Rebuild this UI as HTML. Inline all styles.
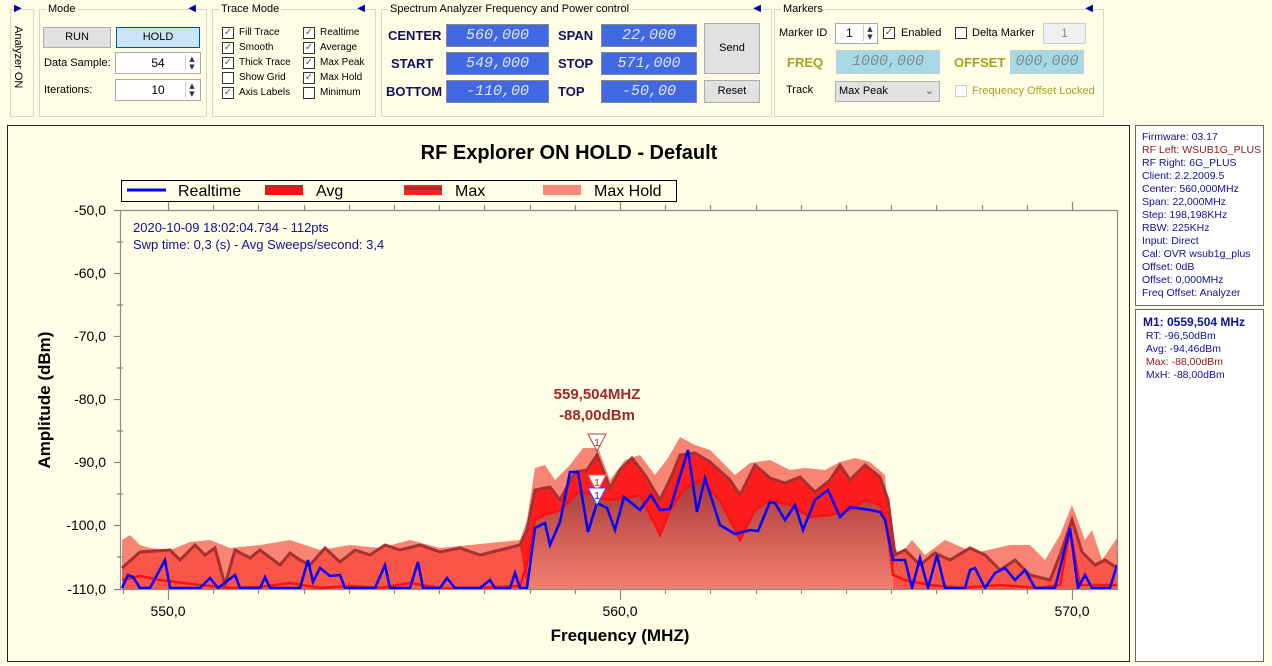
<!DOCTYPE html>
<html><head><meta charset="utf-8"><style>
*{box-sizing:border-box;margin:0;padding:0}
body{width:1272px;height:666px;background:#fefee6;font-family:"Liberation Sans",sans-serif;font-size:11px;color:#000;position:relative;overflow:hidden}
.a{position:absolute}
.grp{position:absolute;border:1px solid #d8d8c8;}
.gt{position:absolute;top:-7px;left:6px;background:#fefee6;padding:0 2px;font-size:11px}
.tri{position:absolute;top:-7px;right:10px;color:#0000a0;font-size:10px}
.cb{position:absolute;width:12px;height:12px;border:1px solid #333;background:#fff;font-size:10px;line-height:10px;text-align:center;color:#555;font-family:"DejaVu Sans",sans-serif}
.lbl{position:absolute;font-size:10px;white-space:nowrap}
.btn{position:absolute;background:#e1e1e1;border:1px solid #adadad;text-align:center;font-size:11px}
.inp{position:absolute;background:#fff;border:1px solid #aaa;text-align:center;font-size:12px}
.lcd{position:absolute;background:#4169e1;border:1px solid #888;outline:1px solid #fff;color:#dfe6ff;font-family:"Liberation Mono",monospace;font-style:italic;font-size:15px;text-align:center}
.fl{position:absolute;font-family:"Liberation Sans",sans-serif;font-weight:bold;font-size:13px;color:#111060}
.spin{position:absolute;width:13px;border-left:1px solid #ccc;font-size:7px;text-align:center;line-height:8px;color:#333;font-family:"DejaVu Sans",sans-serif}
</style></head><body>
<div class="grp" style="left:10px;top:9px;width:24px;height:108px"></div>
<div class="a" style="left:14px;top:3px;color:#0000a0;font-size:10px">&#9654;</div>
<div class="a" style="left:24px;top:26px;transform-origin:0 0;transform:rotate(90deg);font-size:11px;white-space:nowrap">Analyzer ON</div>
<div class="grp" style="left:39px;top:9px;width:168px;height:108px"><span class="gt">Mode</span><span class="tri">&#9664;</span></div>
<div class="btn" style="left:43px;top:27px;width:68px;height:21px;line-height:19px">RUN</div>
<div class="btn" style="left:116px;top:27px;width:84px;height:21px;line-height:19px;background:#cce4f7;border-color:#005499">HOLD</div>
<div class="lbl" style="left:44px;top:57px;font-size:11px">Data Sample:</div>
<div class="inp" style="left:115px;top:52px;width:86px;height:22px;line-height:20px">54</div>
<div class="spin" style="left:185px;top:55px;height:16px">▲<br>▼</div>
<div class="lbl" style="left:44px;top:84px;font-size:11px">Iterations:</div>
<div class="inp" style="left:115px;top:79px;width:86px;height:22px;line-height:20px">10</div>
<div class="spin" style="left:185px;top:82px;height:16px">▲<br>▼</div>
<div class="grp" style="left:212px;top:9px;width:164px;height:108px"><span class="gt">Trace Mode</span><span class="tri">&#9664;</span></div>
<div class="cb" style="left:222px;top:27px">✓</div><div class="lbl" style="left:239px;top:27px">Fill Trace</div>
<div class="cb" style="left:222px;top:42px">✓</div><div class="lbl" style="left:239px;top:42px">Smooth</div>
<div class="cb" style="left:222px;top:57px">✓</div><div class="lbl" style="left:239px;top:57px">Thick Trace</div>
<div class="cb" style="left:222px;top:72px"></div><div class="lbl" style="left:239px;top:72px">Show Grid</div>
<div class="cb" style="left:222px;top:87px">✓</div><div class="lbl" style="left:239px;top:87px">Axis Labels</div>
<div class="cb" style="left:303px;top:27px">✓</div><div class="lbl" style="left:320px;top:27px">Realtime</div>
<div class="cb" style="left:303px;top:42px">✓</div><div class="lbl" style="left:320px;top:42px">Average</div>
<div class="cb" style="left:303px;top:57px">✓</div><div class="lbl" style="left:320px;top:57px">Max Peak</div>
<div class="cb" style="left:303px;top:72px">✓</div><div class="lbl" style="left:320px;top:72px">Max Hold</div>
<div class="cb" style="left:303px;top:87px"></div><div class="lbl" style="left:320px;top:87px">Minimum</div>
<div class="grp" style="left:381px;top:9px;width:391px;height:108px"><span class="gt">Spectrum Analyzer Frequency and Power control</span><span class="tri">&#9664;</span></div>
<div class="fl" style="left:388px;top:28px">CENTER</div>
<div class="fl" style="left:391px;top:56px">START</div>
<div class="fl" style="left:386px;top:84px">BOTTOM</div>
<div class="lcd" style="left:446px;top:24px;width:103px;height:23px;line-height:21px">560,000</div>
<div class="lcd" style="left:446px;top:52px;width:103px;height:23px;line-height:21px">549,000</div>
<div class="lcd" style="left:446px;top:80px;width:103px;height:23px;line-height:21px">-110,00</div>
<div class="fl" style="left:558px;top:28px">SPAN</div>
<div class="fl" style="left:558px;top:56px">STOP</div>
<div class="fl" style="left:558px;top:84px">TOP</div>
<div class="lcd" style="left:601px;top:24px;width:96px;height:23px;line-height:21px">22,000</div>
<div class="lcd" style="left:601px;top:52px;width:96px;height:23px;line-height:21px">571,000</div>
<div class="lcd" style="left:601px;top:80px;width:96px;height:23px;line-height:21px">-50,00</div>
<div class="btn" style="left:704px;top:23px;width:56px;height:51px;line-height:49px">Send</div>
<div class="btn" style="left:704px;top:80px;width:56px;height:23px;line-height:21px">Reset</div>
<div class="grp" style="left:774px;top:9px;width:330px;height:108px"><span class="gt">Markers</span><span class="tri">&#9664;</span></div>
<div class="lbl" style="left:779px;top:27px;font-size:11px">Marker ID</div>
<div class="inp" style="left:835px;top:23px;width:43px;height:21px;line-height:19px;text-align:left;padding-left:10px">1</div>
<div class="spin" style="left:863px;top:25px;height:16px">▲<br>▼</div>
<div class="cb" style="left:883px;top:27px">✓</div><div class="lbl" style="left:901px;top:27px;font-size:11px">Enabled</div>
<div class="cb" style="left:955px;top:27px"></div><div class="lbl" style="left:972px;top:27px;font-size:11px">Delta Marker</div>
<div class="inp" style="left:1043px;top:23px;width:43px;height:21px;line-height:19px;color:#888;background:#f0f0f0;border-color:#ccc">1</div>
<div class="fl" style="left:787px;top:55px;color:#a8a020">FREQ</div>
<div class="lcd" style="left:836px;top:50px;width:104px;height:24px;line-height:22px;background:#a8d8e4;color:#7a8a90;outline:none;border-color:#ccc">1000,000</div>
<div class="fl" style="left:954px;top:55px;color:#a8a020">OFFSET</div>
<div class="lcd" style="left:1010px;top:50px;width:74px;height:24px;line-height:22px;background:#a8d8e4;color:#7a8a90;outline:none;border-color:#ccc">000,000</div>
<div class="lbl" style="left:786px;top:84px;font-size:11px">Track</div>
<div class="btn" style="left:835px;top:81px;width:105px;height:21px;line-height:19px;text-align:left;padding-left:3px;font-size:11px">Max Peak<span style="position:absolute;right:5px;color:#555">&#8964;</span></div>
<div class="cb" style="left:955px;top:85px;border-color:#ccc"></div><div class="lbl" style="left:972px;top:85px;color:#a8a020;font-size:11px">Frequency Offset Locked</div>

<div class="a" style="left:7px;top:125px;width:1123px;height:537px;border:1px solid #222;background:#ffffe8"></div>
<svg class="a" style="left:0;top:0" width="1272" height="666" font-family="Liberation Sans, sans-serif">
<defs><linearGradient id="g" x1="0" y1="0" x2="0" y2="1"><stop offset="0" stop-color="#a83838"/><stop offset="1" stop-color="#f48070"/></linearGradient>
<clipPath id="c"><rect x="121" y="210" width="996" height="379"/></clipPath></defs>
<text x="569" y="159" font-size="20" font-weight="bold" text-anchor="middle">RF Explorer ON HOLD - Default</text>
<rect x="121.5" y="180.5" width="555" height="21" fill="#ffffe8" stroke="#000"/>
<line x1="127" y1="190" x2="166" y2="190" stroke="#0000ff" stroke-width="3"/>
<text x="178" y="196" font-size="16">Realtime</text>
<rect x="265" y="185" width="38" height="10" fill="#ff1010"/><rect x="265" y="185" width="38" height="3" fill="#b03030"/>
<text x="316" y="196" font-size="16">Avg</text>
<rect x="404" y="185" width="38" height="10" fill="#ff2020"/><rect x="404" y="187" width="38" height="3" fill="#a03030"/>
<text x="455" y="196" font-size="16">Max</text>
<rect x="543" y="185" width="38" height="10" fill="#f88878"/>
<text x="594" y="196" font-size="16">Max Hold</text>
<g clip-path="url(#c)">
<polygon fill="#f88474" points="122,540 130,535 140,545 150,548 170,550 190,542 210,540 230,548 260,545 290,540 320,550 350,545 380,548 410,540 440,548 470,545 500,542 520,540 527,520 535,468 545,465 555,480 570,465 583,448 598,448 610,480 625,460 640,455 655,475 668,458 680,437 695,445 710,450 735,475 750,463 770,460 790,470 805,468 825,470 840,462 855,458 870,462 885,475 890,540 900,555 912,540 925,555 945,540 975,553 1010,545 1030,545 1045,560 1060,535 1072,505 1085,540 1092,530 1102,560 1117,538 1117,589 122,589"/>
<polygon fill="#ff1c1c" points="122,568 140,552 170,550 180,560 195,545 205,555 215,548 225,585 235,550 250,558 260,550 280,565 290,553 300,560 310,565 325,548 340,562 355,550 370,555 385,545 400,550 420,545 440,552 460,548 480,555 500,550 520,545 527,530 535,490 550,487 560,500 575,472 587,470 597,455 610,488 620,470 632,458 645,475 660,500 672,475 680,455 695,453 710,462 730,480 740,495 755,465 770,478 785,483 800,477 815,492 830,480 840,465 850,480 865,465 880,477 888,500 895,555 905,550 920,565 935,553 950,560 970,548 985,555 1000,570 1015,560 1030,575 1050,580 1060,555 1072,520 1082,552 1095,565 1105,560 1117,568 1117,589 122,589"/>
<polygon fill="#f86858" opacity="0.75" points="122,568 140,552 170,550 180,560 195,545 205,555 215,548 225,585 235,550 250,558 260,550 280,565 290,553 300,560 310,565 325,548 340,562 355,550 370,555 385,545 400,550 420,545 440,552 460,548 480,555 500,550 520,545 527,589 890,589 895,555 905,550 920,565 935,553 950,560 970,548 985,555 1000,570 1015,560 1030,575 1050,580 1060,555 1072,520 1082,552 1095,565 1105,560 1117,568 1117,589 122,589"/>
<polygon fill="url(#g)" points="527,589 528,560 535,520 545,515 560,510 580,490 598,498 610,500 625,498 640,495 660,535 670,510 685,488 700,480 720,500 740,540 755,510 770,500 790,505 810,517 830,515 850,510 865,500 880,505 886,520 893,575 893,589"/>
<polyline fill="none" stroke="#a83030" stroke-width="3" points="122,568 140,552 170,550 180,560 195,545 205,555 215,548 225,585 235,550 250,558 260,550 280,565 290,553 300,560 310,565 325,548 340,562 355,550 370,555 385,545 400,550 420,545 440,552 460,548 480,555 500,550 520,545 527,530 535,490 550,487 560,500 575,472 587,470 597,455 610,488 620,470 632,458 645,475 660,500 672,475 680,455 695,453 710,462 730,480 740,495 755,465 770,478 785,483 800,477 815,492 830,480 840,465 850,480 865,465 880,477 888,500 895,555 905,550 920,565 935,553 950,560 970,548 985,555 1000,570 1015,560 1030,575 1050,580 1060,555 1072,520 1082,552 1095,565 1105,560 1117,568"/>
<polyline fill="none" stroke="#ff1010" stroke-width="2.5" points="122,580 140,576 160,580 200,585 230,588 260,587 290,583 320,588 350,586 380,588 410,583 440,588 480,588 520,586 528,560 535,520 545,515 560,510 580,490 598,498 610,500 625,498 640,495 660,535 670,510 685,488 700,480 720,500 740,540 755,510 770,500 790,505 810,517 830,515 850,510 865,500 880,505 886,520 893,575 905,580 930,585 960,588 1000,585 1040,588 1060,585 1070,530 1080,585 1117,585"/>
<polyline fill="none" stroke="#0000ff" stroke-width="2.5" points="122,588 128,575 133,577 140,588 150,588 165,560 170,588 200,588 210,578 218,588 235,575 240,588 260,588 265,577 270,588 300,588 308,560 313,582 320,568 330,576 340,575 345,588 375,588 385,565 390,588 410,588 418,562 423,588 440,588 447,578 455,588 480,588 490,580 495,588 510,588 515,573 520,588 527,588 535,528 545,523 550,545 560,522 570,472 578,472 588,532 597,503 607,508 615,530 624,497 640,510 651,495 660,510 670,509 688,450 697,512 705,478 720,525 735,534 750,530 758,531 770,502 775,503 785,520 795,505 803,530 815,500 828,490 840,517 850,507 870,510 880,512 885,520 893,560 905,560 912,588 920,558 928,588 937,555 945,588 965,588 970,570 975,568 985,588 995,573 1005,568 1015,580 1025,570 1035,588 1055,588 1062,560 1070,528 1078,588 1085,575 1092,588 1110,588 1117,565"/>
</g>
<g stroke="#888" stroke-width="1.2" fill="none">
<line x1="120.5" y1="210" x2="120.5" y2="590"/><line x1="1117.5" y1="210" x2="1117.5" y2="590"/>
<line x1="120" y1="210.5" x2="1117" y2="210.5"/><line x1="120" y1="589.5" x2="1117" y2="589.5"/>
<path d="M114 210.5h6M114 273.5h6M114 336.5h6M114 399.5h6M114 462.5h6M114 525.5h6M114 589.5h6M117 242h6M117 305h6M117 368h6M117 431h6M117 494h6M117 557h6"/>
<path d="M168.5 589v11M620.5 589v11M1072.5 589v11M168.5 210v-8M620.5 210v-8M1072.5 210v-8"/>
<path d="M213.5 589v5M258.5 589v5M304.5 589v5M349.5 589v5M394.5 589v5M439.5 589v5M484.5 589v5M530.5 589v5M575.5 589v5M665.5 589v5M710.5 589v5M756.5 589v5M801.5 589v5M846.5 589v5M891.5 589v5M936.5 589v5M982.5 589v5M1027.5 589v5M123.5 589v5"/>
<path d="M213.5 210v-5M258.5 210v-5M304.5 210v-5M349.5 210v-5M394.5 210v-5M439.5 210v-5M484.5 210v-5M530.5 210v-5M575.5 210v-5M665.5 210v-5M710.5 210v-5M756.5 210v-5M801.5 210v-5M846.5 210v-5M891.5 210v-5M936.5 210v-5M982.5 210v-5M1027.5 210v-5"/>
</g>
<g font-size="14" text-anchor="end" fill="#000">
<text x="106" y="215">-50,0</text><text x="106" y="278">-60,0</text><text x="106" y="341">-70,0</text><text x="106" y="404">-80,0</text><text x="106" y="467">-90,0</text><text x="106" y="530">-100,0</text><text x="106" y="594">-110,0</text>
</g>
<g font-size="14" text-anchor="middle"><text x="168" y="616">550,0</text><text x="620" y="616">560,0</text><text x="1072" y="616">570,0</text></g>
<text x="620" y="641" font-size="17" font-weight="bold" text-anchor="middle">Frequency (MHZ)</text>
<text transform="translate(50,400) rotate(-90)" font-size="17" font-weight="bold" text-anchor="middle">Amplitude (dBm)</text>
<text x="133" y="232" font-size="13" fill="#101090">2020-10-09 18:02:04.734 - 112pts</text>
<text x="133" y="249" font-size="13" fill="#101090">Swp time: 0,3 (s) - Avg Sweeps/second: 3,4</text>
<text x="597" y="399" font-size="15" font-weight="bold" fill="#a02828" text-anchor="middle">559,504MHZ</text>
<text x="597" y="420" font-size="15" font-weight="bold" fill="#a02828" text-anchor="middle">-88,00dBm</text>
<polygon points="588,434 606,434 597,451" fill="#fff" stroke="#b04040"/><text x="597" y="446" font-size="10" fill="#b02020" text-anchor="middle">1</text>
<polygon points="588,475 606,475 597,492" fill="#fff" stroke="#ff6060"/><text x="597" y="486" font-size="10" fill="#d01010" text-anchor="middle">1</text>
<polygon points="588,488 606,488 597,505" fill="#fff" stroke="#4040ff"/><text x="597" y="499" font-size="10" fill="#1010c0" text-anchor="middle">1</text>
</svg>
<div class="a" style="left:1135px;top:125px;width:129px;height:181px;border:1px solid #666;background:#fff;padding:5px 0 0 6px;font-size:10.5px;line-height:13px;color:#101090;white-space:nowrap;overflow:hidden">
Firmware: 03.17<br><span style="color:#901818">RF Left: WSUB1G_PLUS</span><br>RF Right: 6G_PLUS<br>Client: 2.2.2009.5<br>Center: 560,000MHz<br>Span: 22,000MHz<br>Step: 198,198KHz<br>RBW: 225KHz<br>Input: Direct<br>Cal: OVR wsub1g_plus<br>Offset: 0dB<br>Offset: 0,000MHz<br>Freq Offset: Analyzer</div>
<div class="a" style="left:1135px;top:309px;width:129px;height:353px;border:1px solid #666;background:#fff;padding:5px 0 0 7px;font-size:10.5px;line-height:13px;color:#101090;white-space:nowrap">
<b style="font-size:12px;line-height:14px">M1: 0559,504 MHz</b><br>&nbsp;RT: -96,50dBm<br>&nbsp;Avg: -94,46dBm<br>&nbsp;<span style="color:#901818">Max: -88,00dBm</span><br>&nbsp;MxH: -88,00dBm</div>
</body></html>
